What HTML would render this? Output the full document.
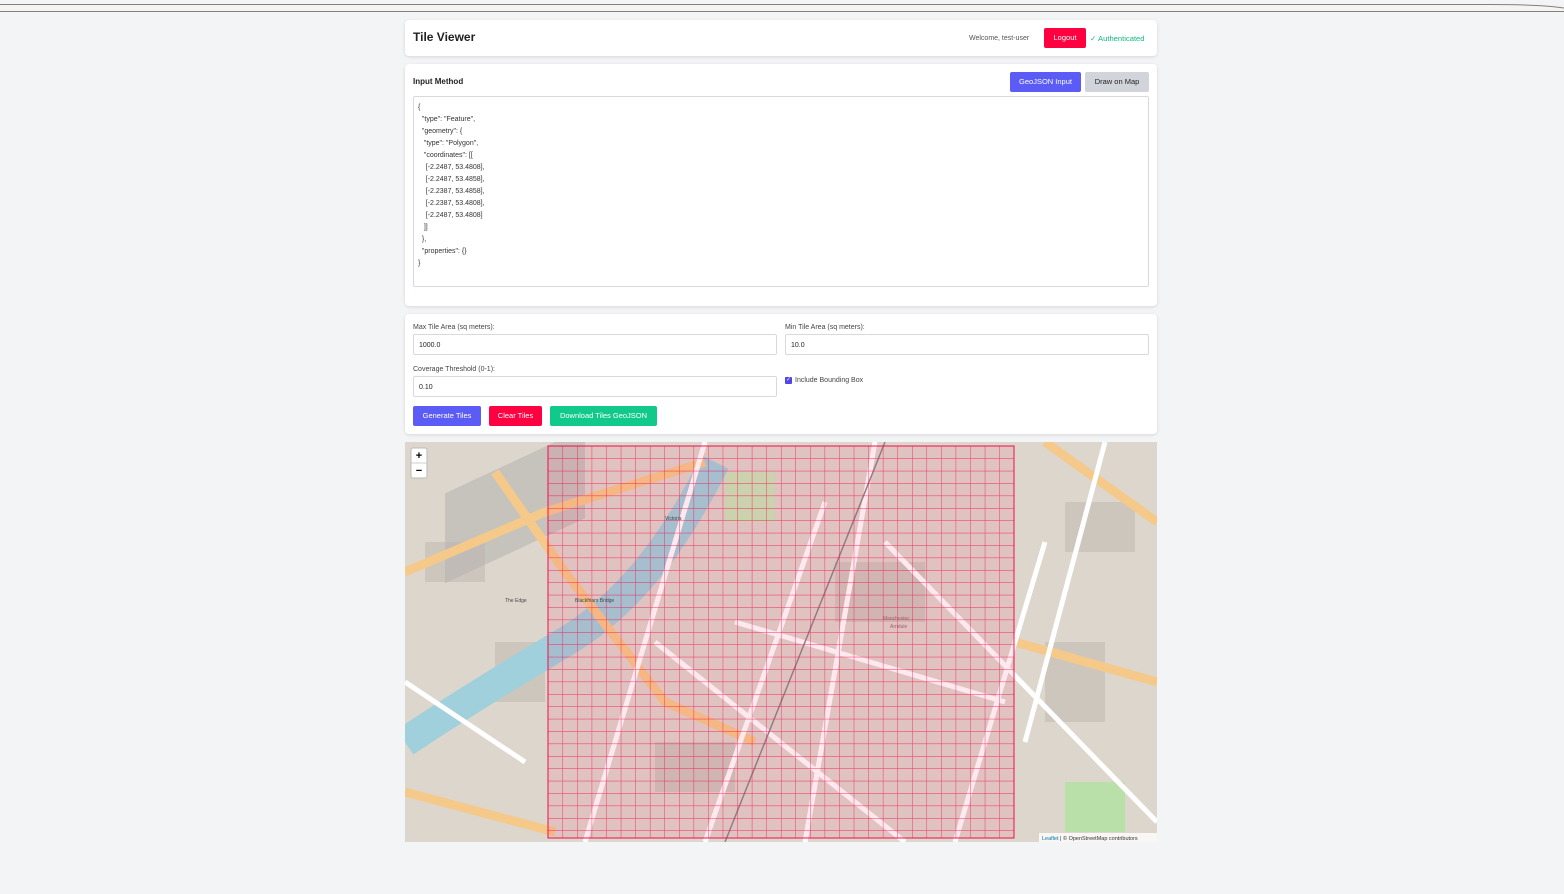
<!DOCTYPE html>
<html><head><meta charset="utf-8"><style>
*{box-sizing:border-box;margin:0;padding:0}
body{width:1564px;height:894px;background:#f3f4f6;font-family:"Liberation Sans",sans-serif;position:relative;overflow:hidden;color:#222}
.card{position:absolute;left:405px;width:752px;background:#fff;border-radius:4px;box-shadow:0 1px 3px rgba(0,0,0,.12)}
.btn{position:absolute;height:20px;font-size:7.5px;color:#fff;line-height:20px;text-align:center;border-radius:2px}
.lbl{position:absolute;font-size:7px;color:#444}
.inp{position:absolute;height:21px;border:1px solid #d8d8de;border-radius:2px;font-size:7px;padding:7px 5px;color:#222}
</style></head><body>
<svg style="position:absolute;left:0;top:0" width="1564" height="14"><path d="M0 4.5H1490Q1540 4.5 1564 8" stroke="#8a7f70" fill="none"/><path d="M0 11.5H1564" stroke="#8a7f70" fill="none"/></svg>

<div class="card" style="top:20px;height:36px">
 <div style="position:absolute;left:8px;top:10px;font-size:12px;font-weight:bold">Tile Viewer</div>
 <div style="position:absolute;left:564px;top:15px;font-size:7px;color:#555">Welcome, test-user</div>
 <div class="btn" style="left:639px;top:8px;width:42px;background:#ff0040">Logout</div>
 <div style="position:absolute;left:685px;top:14px;font-size:7.6px;color:#10b981">✓ Authenticated</div>
</div>

<div class="card" style="top:64px;height:242px">
 <div style="position:absolute;left:8px;top:13px;font-size:8px;font-weight:bold">Input Method</div>
 <div class="btn" style="left:605px;top:8px;width:71px;background:#5b5bf5">GeoJSON Input</div>
 <div class="btn" style="left:680px;top:8px;width:64px;background:#d1d5db;color:#222">Draw on Map</div>
 <div style="position:absolute;left:8px;top:32px;width:736px;height:191px;border:1px solid #d8d8de;border-radius:2px;font-size:7px;line-height:12px;padding:5px 4px;white-space:pre;color:#333">{
  "type": "Feature",
  "geometry": {
   "type": "Polygon",
   "coordinates": [[
    [-2.2487, 53.4808],
    [-2.2487, 53.4858],
    [-2.2387, 53.4858],
    [-2.2387, 53.4808],
    [-2.2487, 53.4808]
   ]]
  },
  "properties": {}
}</div>
</div>

<div class="card" style="top:314px;height:120px">
 <div class="lbl" style="left:8px;top:10px">Max Tile Area (sq meters):</div>
 <div class="inp" style="left:8px;top:20px;width:364px">1000.0</div>
 <div class="lbl" style="left:380px;top:10px">Min Tile Area (sq meters):</div>
 <div class="inp" style="left:380px;top:20px;width:364px">10.0</div>
 <div class="lbl" style="left:8px;top:52px">Coverage Threshold (0-1):</div>
 <div class="inp" style="left:8px;top:62px;width:364px">0.10</div>
 <div style="position:absolute;left:380px;top:63px;width:7px;height:7px;background:#4f46e5;border-radius:1px;color:#fff;font-size:6px;line-height:7px;text-align:center">✓</div>
 <div class="lbl" style="left:390px;top:63px">Include Bounding Box</div>
 <div class="btn" style="left:8px;top:92px;width:68px;background:#5b5bf5">Generate Tiles</div>
 <div class="btn" style="left:84px;top:92px;width:53px;background:#ff0040">Clear Tiles</div>
 <div class="btn" style="left:145px;top:92px;width:107px;background:#10c98a">Download Tiles GeoJSON</div>
</div>

<svg style="position:absolute;left:405px;top:442px" width="752" height="400">
<defs><pattern id="g" x="143" y="4" width="14.56" height="12.4" patternUnits="userSpaceOnUse"><path d="M0 0H14.56M0 0V12.4" stroke="#f0104a" stroke-width="0.9" fill="none"/></pattern></defs>
<rect width="752" height="400" fill="#ddd6cd"/>
<g fill="#cdc6bd"><rect x="20" y="100" width="60" height="40"/><rect x="90" y="200" width="50" height="60"/><rect x="660" y="60" width="70" height="50"/><rect x="640" y="200" width="60" height="80"/><rect x="250" y="300" width="80" height="50"/><rect x="430" y="120" width="90" height="60"/></g>
<rect x="320" y="30" width="50" height="50" fill="#c8e6b8"/>
<rect x="660" y="340" width="60" height="50" fill="#b8e0a8"/>
<rect x="0" y="0" width="140" height="90" fill="#b8b4b0" transform="skewY(-25) translate(40 70)" opacity=".6"/>
<path d="M0 300 C60 260 110 230 160 200 S260 120 310 20" stroke="#9fd0dc" stroke-width="30" fill="none"/>
<g stroke="#f5c98a" stroke-width="9" fill="none"><path d="M0 130 L140 70 L300 20"/><path d="M90 30 L160 130 L260 260 L350 300"/><path d="M0 350 L150 390"/><path d="M610 200 L752 240"/><path d="M640 0 L752 80"/></g>
<g stroke="#fff" stroke-width="5" fill="none"><path d="M180 400 L300 0"/><path d="M300 400 L420 60"/><path d="M400 400 L470 0"/><path d="M330 180 L600 260"/><path d="M480 100 L752 380"/><path d="M550 400 L640 100"/><path d="M0 240 L120 320"/><path d="M700 0 L620 300"/><path d="M250 200 L500 400"/></g>
<path d="M320 400 L480 0" stroke="#888" stroke-width="1.5" fill="none"/>
<rect x="143" y="4" width="466" height="392" fill="#ff1050" opacity=".09"/>
<rect x="143" y="4" width="466" height="392" fill="url(#g)" opacity=".85"/>
<rect x="143" y="4" width="466" height="392" fill="none" stroke="#f0104a"/>
<rect x="6" y="6" width="16" height="30" fill="#fff" stroke="#bbb" rx="2"/>
<path d="M6 21H22" stroke="#ccc"/>
<text x="14" y="17" font-size="11" text-anchor="middle" font-family="Liberation Sans" font-weight="bold">+</text>
<text x="14" y="32" font-size="11" text-anchor="middle" font-family="Liberation Sans" font-weight="bold">−</text>
<rect x="634" y="391" width="118" height="9" fill="#fff" opacity=".8"/>
<text x="637" y="398" font-size="5.5" fill="#333" font-family="Liberation Sans"><tspan fill="#0078a8">Leaflet</tspan> | © OpenStreetMap contributors</text>
<g font-size="5" fill="#444" font-family="Liberation Sans"><text x="170" y="160">Blackfriars Bridge</text><text x="478" y="178" fill="#a06070">Manchester</text><text x="485" y="186" fill="#a06070">Arndale</text><text x="100" y="160">The Edge</text><text x="260" y="78">Victoria</text></g>
</svg>
</body></html>
